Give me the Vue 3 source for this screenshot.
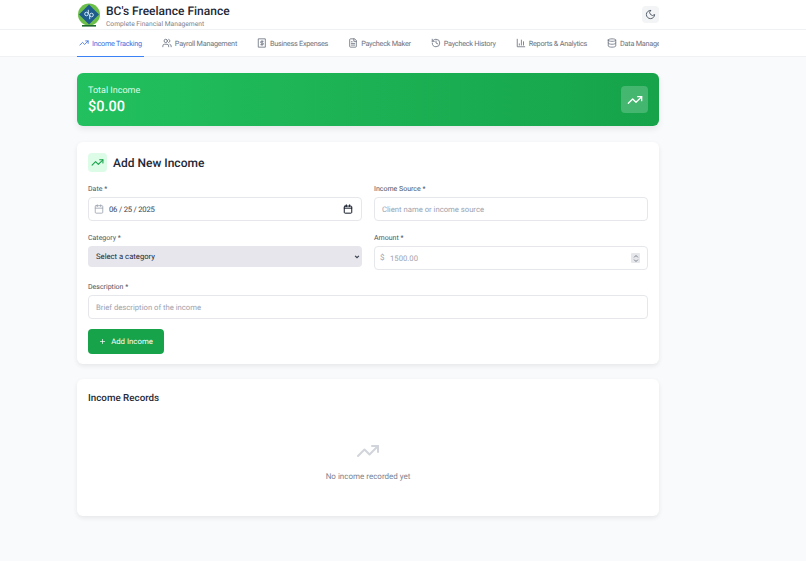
<template>
  <div class="page">
    <header class="topbar">
      <div class="wrap topbar-row">
        <div class="brand">
          <svg class="logo" viewBox="0 0 24 24" width="24" height="24">
            <circle cx="12" cy="11.5" r="11" fill="#6cc04a" />
            <path d="M12 1.5 22 11.5 12 21.5 2 11.5Z" fill="#1f5c8e" />
            <circle cx="9.5" cy="11" r="1.8" fill="none" stroke="#cfe9f5" stroke-width="1" />
            <path d="M11.3 11V6.8" fill="none" stroke="#cfe9f5" stroke-width="1" />
            <circle cx="14.5" cy="12" r="1.8" fill="none" stroke="#cfe9f5" stroke-width="1" />
            <path d="M12.7 12v4.2" fill="none" stroke="#cfe9f5" stroke-width="1" />
            <rect x="5" y="22" width="14" height="1.6" fill="#1d6b2c" />
          </svg>
          <div class="brand-text">
            <h1>BC's Freelance Finance</h1>
            <p>Complete Financial Management</p>
          </div>
        </div>
        <button class="theme-btn" aria-label="Toggle theme">
          <svg viewBox="0 0 24 24" width="11" height="11" fill="none" stroke="#4b5563" stroke-width="2" stroke-linecap="round" stroke-linejoin="round">
            <path d="M12 3a6 6 0 0 0 9 9 9 9 0 1 1-9-9Z" />
          </svg>
        </button>
      </div>
    </header>

    <nav class="tabs">
      <div class="wrap tabs-row">
        <a v-for="tab in tabs" :key="tab.label" class="tab" :class="{ active: tab.active }">
          <svg viewBox="0 0 24 24" width="10" height="10" fill="none" stroke="currentColor" stroke-width="2" stroke-linecap="round" stroke-linejoin="round">
            <path v-for="d in tab.icon" :key="d" :d="d" />
          </svg>
          {{ tab.label }}
        </a>
      </div>
    </nav>

    <main class="wrap content">
      <section class="banner">
        <div class="banner-text">
          <div class="banner-label">Total Income</div>
          <div class="banner-value">$0.00</div>
        </div>
        <div class="banner-icon">
          <svg viewBox="0 0 24 24" width="16" height="16" fill="none" stroke="#fff" stroke-width="2" stroke-linecap="round" stroke-linejoin="round">
            <path :d="trend[0]" /><path :d="trend[1]" />
          </svg>
        </div>
      </section>

      <section class="card form-card">
        <div class="card-head">
          <div class="head-icon">
            <svg viewBox="0 0 24 24" width="13" height="13" fill="none" stroke="#16a34a" stroke-width="2" stroke-linecap="round" stroke-linejoin="round">
              <path :d="trend[0]" /><path :d="trend[1]" />
            </svg>
          </div>
          <h2>Add New Income</h2>
        </div>

        <form class="form-grid" @submit.prevent>
          <div class="field">
            <label>Date *</label>
            <div class="control">
              <svg class="lead-icon" viewBox="0 0 24 24" width="10" height="10" fill="none" stroke="#9ca3af" stroke-width="2" stroke-linecap="round" stroke-linejoin="round">
                <rect x="3" y="4" width="18" height="18" rx="2" /><path d="M16 2v4M8 2v4M3 10h18" />
              </svg>
              <input class="input date-text" type="text" value="06 / 25 / 2025" />
              <svg class="cal-icon" viewBox="0 0 24 24" width="10" height="10" fill="none" stroke="#111827" stroke-width="2.4" stroke-linecap="round" stroke-linejoin="round">
                <rect x="3" y="5" width="18" height="17" rx="2" /><path d="M8 2v4M16 2v4M3 10h18" />
              </svg>
            </div>
          </div>
          <div class="field">
            <label>Income Source *</label>
            <input class="input" type="text" placeholder="Client name or income source" />
          </div>
          <div class="field">
            <label>Category *</label>
            <div class="control">
              <select class="input select">
                <option>Select a category</option>
              </select>
              <svg class="chevron" viewBox="0 0 8 8" width="6" height="6" fill="none" stroke="#374151" stroke-width="1.6">
                <path d="M1.5 2.5 4 5l2.5-2.5" />
              </svg>
            </div>
          </div>
          <div class="field">
            <label>Amount *</label>
            <div class="control">
              <span class="dollar">$</span>
              <input class="input amount" type="text" placeholder="1500.00" />
              <span class="spinner">
                <svg viewBox="0 0 8 12" width="6" height="9" fill="none" stroke="#6b7280" stroke-width="1.2">
                  <path d="M1.5 4.5 4 2l2.5 2.5M1.5 7.5 4 10l2.5-2.5" />
                </svg>
              </span>
            </div>
          </div>
          <div class="field wide">
            <label>Description *</label>
            <input class="input" type="text" placeholder="Brief description of the income" />
          </div>
        </form>

        <button class="add-btn">
          <svg viewBox="0 0 24 24" width="7" height="7" fill="none" stroke="#fff" stroke-width="2.4" stroke-linecap="round">
            <path d="M12 5v14M5 12h14" />
          </svg>
          Add Income
        </button>
      </section>

      <section class="card records">
        <h3>Income Records</h3>
        <div class="empty">
          <svg viewBox="0 0 24 24" width="24" height="24" fill="none" stroke="#d1d5db" stroke-width="2" stroke-linecap="round" stroke-linejoin="round">
            <path :d="trend[0]" /><path :d="trend[1]" />
          </svg>
          <p>No income recorded yet</p>
        </div>
      </section>
    </main>
  </div>
</template>

<script setup>
const trend = ['M22 7 13.5 15.5 8.5 10.5 2 17', 'M16 7h6v6']

const tabs = [
  { label: 'Income Tracking', active: true, icon: trend },
  {
    label: 'Payroll Management',
    icon: ['M16 21v-2a4 4 0 0 0-4-4H6a4 4 0 0 0-4 4v2', 'M13 7a4 4 0 1 1-8 0 4 4 0 0 1 8 0Z', 'M22 21v-2a4 4 0 0 0-3-3.87', 'M16 3.13a4 4 0 0 1 0 7.75']
  },
  {
    label: 'Business Expenses',
    icon: ['M4 2h16v20H4Z', 'M15 8h-4.5a1.5 1.5 0 0 0 0 4h3a1.5 1.5 0 0 1 0 4H9', 'M12 17.5v-11']
  },
  {
    label: 'Paycheck Maker',
    icon: ['M15 2H6a2 2 0 0 0-2 2v16a2 2 0 0 0 2 2h12a2 2 0 0 0 2-2V7Z', 'M14 2v6h6', 'M16 13H8', 'M16 17H8', 'M10 9H8']
  },
  {
    label: 'Paycheck History',
    icon: ['M3 12a9 9 0 1 0 9-9 9.75 9.75 0 0 0-6.74 2.74L3 8', 'M3 3v5h5', 'M12 7v5l4 2']
  },
  {
    label: 'Reports & Analytics',
    icon: ['M3 3v18h18', 'M18 17V9', 'M13 17V5', 'M8 17v-3']
  },
  {
    label: 'Data Management',
    icon: ['M3 5c0-1.66 4-3 9-3s9 1.34 9 3-4 3-9 3-9-1.34-9-3Z', 'M3 5v14c0 1.66 4 3 9 3s9-1.34 9-3V5', 'M3 12c0 1.66 4 3 9 3s9-1.34 9-3']
  }
]
</script>

<style>
body {
  background: #fff;
}
</style>

<style scoped>
.page {
  height: 561px;
  background: #f9fafb;
  font-family: Roboto, "Noto Sans", sans-serif;
  text-rendering: geometricPrecision;
  color: #1f2937;
  overflow: hidden;
}

.wrap {
  width: 582px;
  margin-left: 77px;
}

.topbar {
  height: 29px;
  background: #fff;
  border-bottom: 1px solid #f0f1f3;
}

.topbar-row {
  display: flex;
  align-items: center;
  justify-content: space-between;
  height: 29px;
}

.brand {
  display: flex;
  align-items: center;
  gap: 5px;
}

.logo {
  flex: none;
}

.brand-text {
  padding-top: 2px;
}

h1 {
  margin: 0;
  font-size: 12px;
  line-height: 16px;
  font-weight: 500;
  color: #1f2937;
}

.brand p {
  margin: 0;
  font-size: 6.7px;
  line-height: 10px;
  color: #7b8390;
}

.theme-btn {
  width: 17px;
  height: 17px;
  padding: 0;
  border: 0;
  border-radius: 4px;
  background: #f3f4f6;
  display: flex;
  align-items: center;
  justify-content: center;
}

.tabs {
  height: 26px;
  background: #fff;
  border-bottom: 1px solid #f0f1f3;
}

.tabs-row {
  display: flex;
  gap: 16px;
  overflow: hidden;
  height: 27px;
}

.tab {
  flex: none;
  display: flex;
  align-items: center;
  gap: 3px;
  padding: 0 2px;
  height: 27px;
  box-sizing: border-box;
  font-size: 7.3px;
  letter-spacing: -0.26px;
  font-weight: 400;
  color: #6b7280;
  border-bottom: 1px solid transparent;
}

.tab.active {
  color: #3b6fe0;
  border-bottom-color: #3b82f6;
}

.content {
  padding-top: 16px;
}

.banner {
  height: 53px;
  box-sizing: border-box;
  padding: 0 11px;
  display: flex;
  align-items: center;
  justify-content: space-between;
  border-radius: 6px;
  background: linear-gradient(90deg, #22c05e, #16a34a);
  box-shadow: 0 3px 6px rgba(0, 0, 0, 0.08);
  color: #fff;
}

.banner-text {
  padding-top: 2px;
}

.banner-label {
  font-size: 9px;
  line-height: 12px;
  color: #dcfce7;
}

.banner-value {
  font-size: 14.5px;
  line-height: 18px;
  font-weight: 500;
  padding-top: 1px;
}

.banner-icon {
  width: 27px;
  height: 27px;
  border-radius: 4px;
  background: rgba(255, 255, 255, 0.2);
  display: flex;
  align-items: center;
  justify-content: center;
}

.card {
  background: #fff;
  border-radius: 6px;
  box-shadow: 0 2px 5px rgba(0, 0, 0, 0.08);
  padding: 11px;
}

.form-card {
  margin-top: 16px;
  height: 222px;
  box-sizing: border-box;
}

.card-head {
  display: flex;
  align-items: center;
  gap: 6px;
  margin-bottom: 11px;
}

.head-icon {
  width: 19px;
  height: 19px;
  border-radius: 4px;
  background: #dcfce7;
  display: flex;
  align-items: center;
  justify-content: center;
}

h2 {
  margin: 0;
  font-size: 12px;
  font-weight: 500;
  color: #1f2937;
}

.form-grid {
  display: grid;
  grid-template-columns: 1fr 1fr;
  column-gap: 12px;
  row-gap: 11px;
}

.field.wide {
  grid-column: 1 / -1;
}

label {
  display: block;
  font-size: 7px;
  line-height: 12px;
  font-weight: 400;
  color: #4b5563;
  margin-bottom: 2px;
}

.control {
  position: relative;
}

.input {
  display: block;
  width: 100%;
  height: 24px;
  box-sizing: border-box;
  padding: 0 7px;
  border: 1px solid #e5e7eb;
  border-radius: 4px;
  background: #fff;
  font-family: inherit;
  font-size: 7.7px;
  color: #374151;
  outline: none;
  text-rendering: geometricPrecision;
}

.input::placeholder {
  color: #9ca3af;
}

.input.date-text {
  padding-left: 20px;
  letter-spacing: -0.2px;
}

.input.amount {
  padding-left: 15px;
}

.select {
  height: 21px;
  padding-left: 8px;
  border: 0;
  background-color: #e6e6ec;
  color: #1f2937;
  appearance: none;
}

.chevron {
  position: absolute;
  right: 2px;
  top: 8px;
}

.lead-icon,
.cal-icon {
  position: absolute;
  top: 7px;
}

.lead-icon {
  left: 6px;
}

.cal-icon {
  right: 9px;
}

.dollar {
  position: absolute;
  left: 6px;
  top: 7px;
  font-size: 8px;
  color: #9ca3af;
}

.spinner {
  position: absolute;
  right: 8px;
  top: 7px;
  width: 9px;
  height: 10px;
  background: #e5e7eb;
  border-radius: 1px;
  display: flex;
  align-items: center;
  justify-content: center;
}

.add-btn {
  margin-top: 10px;
  height: 25px;
  width: 76px;
  display: flex;
  align-items: center;
  justify-content: center;
  gap: 5px;
  border: 0;
  border-radius: 4px;
  background: #16a34a;
  color: #fff;
  font-family: inherit;
  font-size: 7.8px;
  font-weight: 400;
  text-rendering: geometricPrecision;
}

.records {
  margin-top: 15px;
  height: 137px;
  box-sizing: border-box;
}

h3 {
  margin: 0;
  font-size: 9.8px;
  line-height: 18px;
  font-weight: 500;
  color: #1f2937;
}

.empty {
  margin-top: 31px;
  text-align: center;
}

.empty svg {
  display: block;
  margin: 0 auto;
}

.empty p {
  margin: 9px 0 0;
  font-size: 8px;
  color: #7b8390;
}
</style>
